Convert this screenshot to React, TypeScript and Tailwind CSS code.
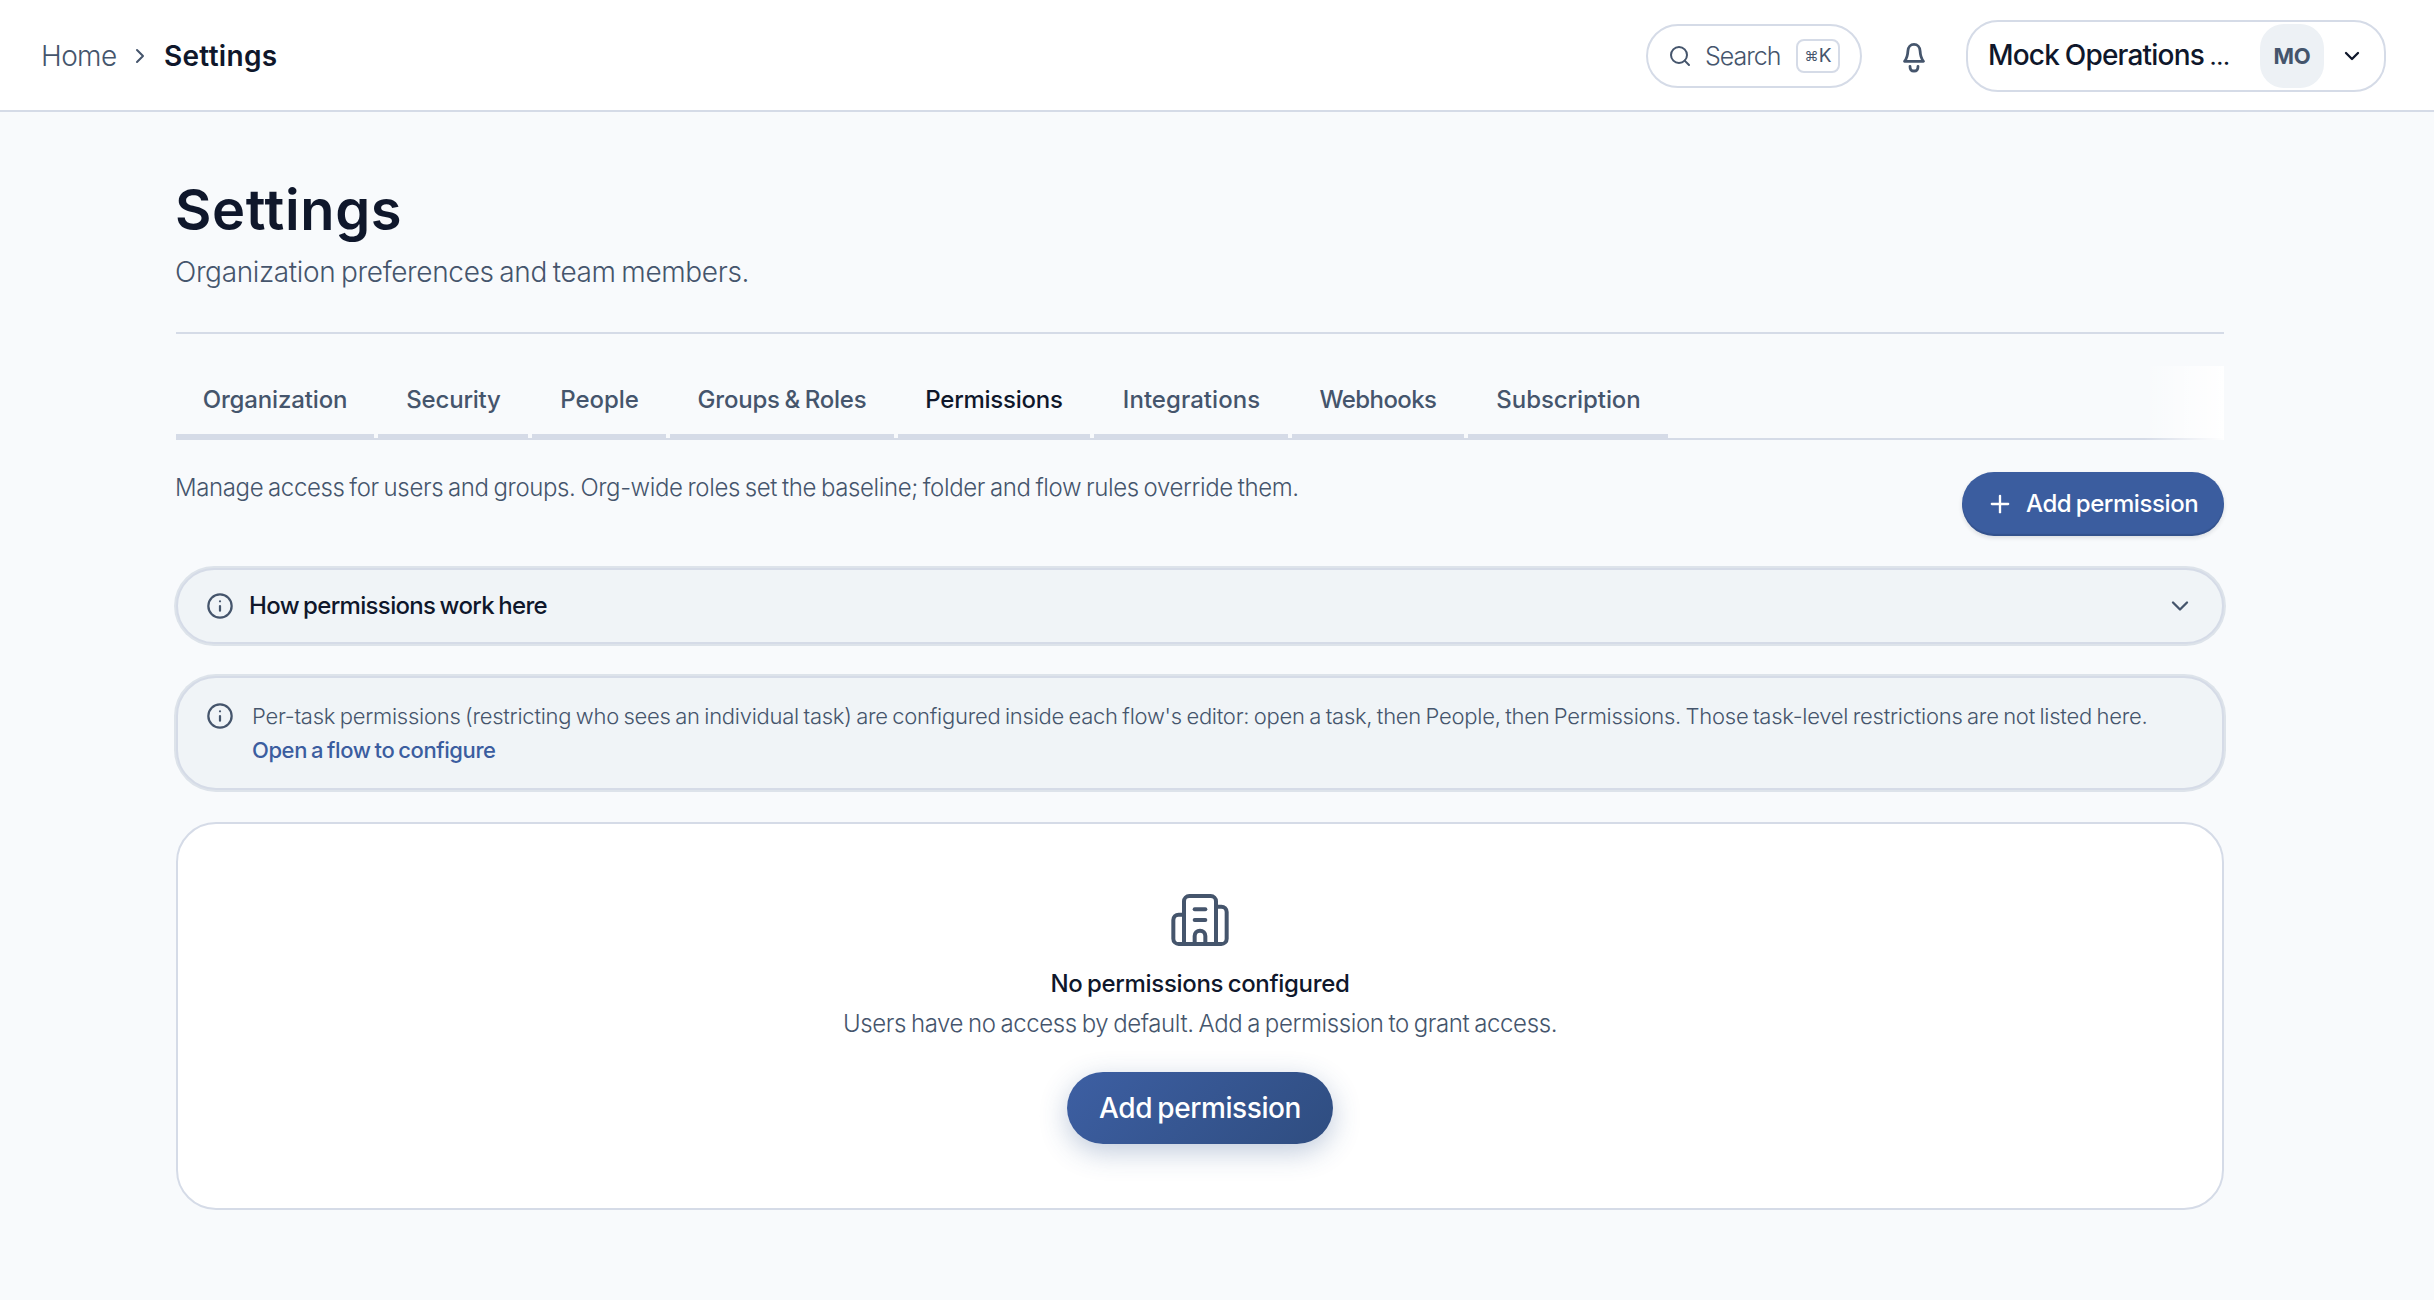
import React from 'react';
import { Building2, ChevronDown, ChevronRight, Info, Plus, Search } from 'lucide-react';

const tabs = [
  { label: 'Organization', className: 'w-[198px] tracking-[-0.14px]' },
  { label: 'Security', className: 'w-[150px] pl-px tracking-[-0.2px]' },
  { label: 'People', className: 'w-[134px] pl-px tracking-[-0.06px]' },
  { label: 'Groups & Roles', className: 'w-[224px] tracking-[-0.2px] [word-spacing:-1.5px]' },
  { label: 'Permissions', className: 'w-[192px] tracking-[-0.24px]', active: true },
  { label: 'Integrations', className: 'w-[194px] pl-px tracking-[0.05px]' },
  { label: 'Webhooks', className: 'w-[172px] tracking-[-0.6px]' },
  { label: 'Subscription', className: 'w-[200px] pl-px tracking-[-0.07px]' },
];

const BellIcon = () => (
  <svg
    width="28"
    height="32"
    viewBox="0 0 28 32"
    fill="none"
    stroke="currentColor"
    strokeWidth="2.8"
    strokeLinecap="round"
    strokeLinejoin="round"
  >
    <path d="M4.5 19.3C6.6 16.8 7.7 13 7.9 9C8.1 4.8 10.7 2.4 14 2.4S19.9 4.8 20.1 9C20.3 13 21.4 16.8 23.5 19.3Z" />
    <path d="M10 24.4C10 27.4 11.6 29 14 29S18 27.4 18 24.4" />
  </svg>
);

const Header = () => (
  <header className="h-28 pt-0.5 pl-[41px] pr-12 flex items-center justify-between bg-white border-b-2 border-[#d5dbe7]">
    <nav className="flex items-center gap-3 text-[28px] leading-10">
      <a href="#" className="w-[75px] whitespace-nowrap font-light tracking-[-0.6px] text-slate-600">Home</a>
      <ChevronRight size={24} strokeWidth={2} className="text-slate-600" />
      <span className="font-semibold tracking-[0.3px] text-slate-900">Settings</span>
    </nav>

    <div className="flex items-center gap-5">
      <button className="w-[216px] h-16 pl-5 pr-5 flex items-center rounded-[32px] border-2 border-[#d5dbe7] text-slate-600">
        <Search size={24} strokeWidth={2} className="shrink-0" />
        <span className="ml-[13px] text-[25px] leading-8 font-light tracking-[-1px]">Search</span>
        <kbd className="ml-auto w-11 h-[34px] flex items-center justify-center rounded-lg border-2 border-[#d5dbe7] font-['Inter',sans-serif]">
          <span className="text-[14px] leading-5">⌘</span>
          <span className="text-[19px] leading-6">K</span>
        </kbd>
      </button>

      <button className="w-16 h-16 flex items-center justify-center pt-1 text-slate-600">
        <BellIcon />
      </button>

      <button className="w-[420px] h-[72px] pl-5 pr-5 flex items-center rounded-[32px] border-2 border-[#d5dbe7] text-slate-900">
        <span className="text-[28px] leading-10 font-medium whitespace-nowrap tracking-[-0.8px] [word-spacing:-1px]">
          Mock Operations <span className="text-[21px] font-semibold">…</span>
        </span>
        <span className="ml-auto w-16 h-16 flex items-center justify-center rounded-3xl bg-[#edf1f5] text-[22px] font-bold tracking-[-0.2px] text-slate-600">
          MO
        </span>
        <ChevronDown size={24} strokeWidth={2.3} className="ml-4" />
      </button>
    </div>
  </header>
);

const Tabs = () => (
  <div className="relative mt-8 h-[74px] flex gap-1 border-b-2 border-[#d5dbe7]">
    {tabs.map((tab) => (
      <button
        key={tab.label}
        className={`h-[72px] border-b-4 border-[#d5dbe7] text-2xl font-medium whitespace-nowrap ${tab.active ? 'text-slate-900' : 'text-slate-600'} ${tab.className}`}
      >
        {tab.label}
      </button>
    ))}
    {/* scroll fade */}
    <div className="absolute top-0 right-0 -bottom-0.5 w-20 bg-gradient-to-r from-white/0 to-white" />
  </div>
);

export default function App() {
  return (
    <div className="min-h-[1300px] bg-[#f8fafc] font-['Inter',sans-serif] text-slate-900">
      <Header />

      <main className="w-[2048px] ml-44 pt-[66px]">
        <h1 className="-ml-px text-[56px] leading-[64px] font-semibold tracking-[0.65px]">Settings</h1>
        <p className="-ml-px mt-2 text-[28px] leading-[44px] font-light tracking-[-0.36px] [word-spacing:-1.8px] text-slate-600">
          Organization preferences and team members.
        </p>
        <hr className="mt-[38px] border-t-2 border-[#d5dbe7]" />

        <Tabs />

        <div className="mt-8 flex items-start justify-between">
          <p className="-ml-px text-2xl leading-8 font-light tracking-[-0.38px] [word-spacing:-1.5px] text-slate-600">
            Manage access for users and groups. Org-wide roles set the baseline; folder and flow rules override them.
          </p>
          <button className="w-[262px] h-16 pl-6 flex items-center gap-[13px] rounded-full bg-[#3b5d9f] text-white shadow-[inset_0_-2px_1px_rgba(15,23,42,0.16),0_2px_4px_rgba(15,23,42,0.12)]">
            <Plus size={28} strokeWidth={2} className="shrink-0" />
            <span className="-ml-px text-2xl font-medium whitespace-nowrap tracking-[-0.42px] [word-spacing:-1.5px]">Add permission</span>
          </button>
        </div>

        <button className="mt-8 w-full h-[76px] px-7 flex items-center rounded-[40px] border-2 border-[#d5dbe7] ring-2 ring-[#dde3ea] bg-[#f0f4f7]">
          <Info size={28} strokeWidth={1.9} className="text-slate-600" />
          <span className="ml-[15px] text-2xl font-medium tracking-[-0.67px] [word-spacing:-1.5px]">How permissions work here</span>
          <ChevronDown size={28} strokeWidth={2} className="ml-auto text-slate-600" />
        </button>

        <div className="mt-8 h-[114px] px-7 pt-[21px] flex items-start rounded-[40px] border-2 border-[#d5dbe7] ring-2 ring-[#dde3ea] bg-[#f0f4f7]">
          <Info size={28} strokeWidth={1.9} className="mt-[3px] shrink-0 text-slate-600" />
          <div className="ml-[18px] text-[22px] leading-[34px] whitespace-nowrap [word-spacing:-1.4px]">
            <p className="font-light tracking-[-0.257px] text-slate-600">
              Per-task permissions (restricting who sees an individual task) are configured inside each flow's editor: open a task, then People, then Permissions. Those task-level restrictions are not listed here.
            </p>
            <a href="#" className="block font-medium tracking-[-0.42px] text-[#3b5d9f]">Open a flow to configure</a>
          </div>
        </div>

        <section className="mt-8 h-[388px] pt-16 flex flex-col items-center rounded-[40px] border-2 border-[#d5dbe7] bg-white">
          <Building2 size={64} strokeWidth={1.5} className="text-slate-600" />
          <h2 className="mt-4 text-2xl leading-8 font-medium tracking-[-0.33px] [word-spacing:-1.5px]">No permissions configured</h2>
          <p className="mt-2 text-2xl leading-8 font-light tracking-[-0.38px] [word-spacing:-1.5px] text-slate-600">
            Users have no access by default. Add a permission to grant access.
          </p>
          <button className="mt-8 w-[266px] h-[72px] rounded-full bg-linear-135 from-[#3d5fa3] to-[#2f4d80] text-[28px] font-medium whitespace-nowrap tracking-[-0.42px] [word-spacing:-1.8px] text-white shadow-[0_8px_28px_rgba(48,82,138,0.3)]">
            Add permission
          </button>
        </section>
      </main>
    </div>
  );
}
